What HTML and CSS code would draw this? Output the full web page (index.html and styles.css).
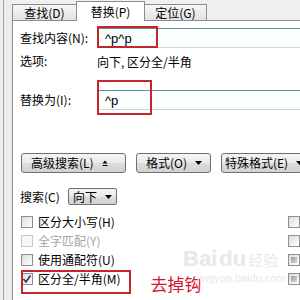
FILE: index.html
```html
<!DOCTYPE html>
<html lang="zh-CN">
<head>
    <meta charset="UTF-8">
    <meta name="viewport" content="width=device-width, initial-scale=1.0">
    <title>查找和替换</title>
    <link rel="stylesheet" href="styles.css">
</head>
<body>
    <div class="window">
        <div class="strip"></div>
        <div class="dialog">
            <!-- 选项卡 -->
            <div class="tabs">
                <div class="tab">查找(D)</div>
                <div class="tab active">替换(P)</div>
                <div class="tab">定位(G)</div>
            </div>
            <div class="panel">
                <div class="row find-row">
                    <span class="label">查找内容(N):</span>
                    <div class="field"><span>^p^p</span><span class="mark mark-find"></span></div>
                </div>
                <div class="row options-row">
                    <span class="label">选项:</span>
                    <span>向下, 区分全/半角</span>
                </div>
                <div class="row replace-row">
                    <span class="label">替换为(I):</span>
                    <div class="field"><span>^p</span><span class="mark mark-replace"></span></div>
                </div>
                <!-- 按钮 -->
                <div class="buttons">
                    <div class="btn btn-more">高级搜索(L)
                        <svg class="arrow" width="6" height="6" viewBox="0 0 6 6"><path d="M0.5 3.5 L3 0.5 L5.5 3.5 Z" fill="#000"/><rect x="0.5" y="5" width="5" height="1" fill="#000"/></svg>
                    </div>
                    <div class="btn btn-format">格式(O)
                        <svg class="arrow" width="7" height="4" viewBox="0 0 7 4"><path d="M0 0 H7 L3.5 4 Z" fill="#000"/></svg>
                    </div>
                    <div class="btn btn-special">特殊格式(E)
                        <svg class="arrow" width="7" height="4" viewBox="0 0 7 4"><path d="M0 0 H7 L3.5 4 Z" fill="#000"/></svg>
                    </div>
                </div>
                <div class="row search-row">
                    <span class="search-label">搜索(C)</span>
                    <div class="select">向下
                        <svg class="arrow" width="7" height="4" viewBox="0 0 7 4"><path d="M0 0 H7 L3.5 4 Z" fill="#000"/></svg>
                    </div>
                </div>
                <!-- 复选框 -->
                <div class="checks">
                    <div class="check"><span class="box"></span>区分大小写(H)</div>
                    <div class="check"><span class="box"></span></div>
                    <div class="check disabled"><span class="box"></span>全字匹配(Y)</div>
                    <div class="check"><span class="box"></span></div>
                    <div class="check"><span class="box"></span>使用通配符(U)</div>
                    <div class="check"><span class="box"><span class="inner"></span></span></div>
                    <div class="check last">
                        <span class="box"><svg width="10" height="10" viewBox="0 0 10 10"><polyline points="1.5,5 4,8 8.5,1.5" fill="none" stroke="#24365e" stroke-width="1.6"/></svg></span>区分全/半角(M)
                        <span class="mark mark-check"></span>
                        <span class="note">去掉钩</span>
                    </div>
                    <div class="check"><span class="box"><span class="inner"></span></span></div>
                </div>
            </div>
        </div>
        <div class="watermark">
            <div class="wm-logo"><span class="wm-big">Bai</span><span class="wm-big">du</span><span class="wm-cn">经验</span></div>
            <div class="wm-url">jingyan.baidu.com</div>
        </div>
    </div>
</body>
</html>
```

FILE: styles.css
```css
*{
    margin: 0;
    padding: 0;
}
body{
    font-family: "Noto Sans CJK SC", "Liberation Sans", sans-serif;
    font-size: 12px;
    color: #000;
    background: #f0f0f0;
}
.window{
    position: relative;
    display: flex;
    width: 300px;
    height: 300px;
    overflow: hidden;
}
.strip{
    flex: 0 0 9px;
    margin-left: 3px;
    box-sizing: border-box;
    border-left: 1px solid #a4a4a4;
    background: #ececec;
}
.dialog{
    flex: 0 0 340px;
    display: flex;
    flex-direction: column;
}
.tabs{
    display: flex;
    align-items: flex-end;
    height: 20px;
}
.tab{
    box-sizing: border-box;
    height: 16px;
    border: 1px solid #898c95;
    border-bottom: none;
    background: linear-gradient(#f6f6f6, #e2e2e2);
    display: flex;
    align-items: center;
    justify-content: center;
    line-height: 1;
}
.tab:nth-child(1){
    width: 65px;
}
.tab:nth-child(3){
    width: 63px;
    margin-left: -1px;
}
.tab.active{
    position: relative;
    z-index: 1;
    width: 69px;
    height: 20px;
    margin-left: -1px;
    margin-bottom: -1px;
    background: #fff;
}
.panel{
    flex: 1;
    background: #fff;
    border-top: 1px solid #898c95;
    border-left: 1px solid #898c95;
    padding-left: 7px;
}
.row{
    display: flex;
    align-items: center;
}
.label{
    width: 77px;
    flex-shrink: 0;
    line-height: 14px;
}
.find-row{
    margin-top: 7px;
}
.options-row{
    margin-top: 6px;
    height: 14px;
}
.replace-row{
    margin-top: 22px;
}
.field{
    position: relative;
    flex: 1;
    height: 20px;
    box-sizing: border-box;
    border: 1px solid #ccd6d8;
    border-top-color: #6f8e95;
    background: #fbfefe;
    display: flex;
    align-items: center;
    padding-left: 7px;
    font-family: "Liberation Sans", sans-serif;
    font-size: 13px;
}
.mark{
    position: absolute;
    box-sizing: border-box;
    border: 2px solid #c4262e;
}
.mark-find{
    left: -1px;
    top: -3px;
    width: 61px;
    height: 22px;
}
.mark-replace{
    left: -1px;
    top: -11px;
    width: 55px;
    height: 35px;
}
.buttons{
    display: flex;
    gap: 10px;
    margin-top: 43px;
    padding-left: 1px;
}
.btn, .select{
    box-sizing: border-box;
    height: 20px;
    display: flex;
    align-items: center;
    border: 1px solid #707070;
    border-radius: 3px;
    background: linear-gradient(#f4f4f4 0%, #ebebeb 48%, #dddddd 52%, #d2d2d2 100%);
    flex-shrink: 0;
    line-height: 1;
}
.btn-more{
    width: 105px;
    padding-left: 9px;
}
.btn-more .arrow{
    margin-left: 8px;
}
.btn-format{
    width: 75px;
    padding-left: 9px;
}
.btn-format .arrow{
    margin-left: 8px;
}
.btn-special{
    width: 90px;
    padding-left: 3px;
}
.btn-special .arrow{
    margin-left: 8px;
}
.search-row{
    margin-top: 15px;
}
.search-label{
    width: 48px;
}
.select{
    width: 49px;
    height: 17px;
    border-radius: 2px;
    padding-left: 4px;
}
.select .arrow{
    margin-left: 8px;
}
.checks{
    display: grid;
    grid-template-columns: 267px 1fr;
    grid-auto-rows: 19px;
    margin-top: 7px;
}
.check{
    position: relative;
    display: flex;
    align-items: center;
    gap: 5px;
    padding-left: 1px;
}
.box{
    box-sizing: border-box;
    width: 12px;
    height: 12px;
    border: 1px solid #8f8f8f;
    background: linear-gradient(135deg, #dcdcdc, #ffffff);
    display: flex;
    align-items: center;
    justify-content: center;
    flex-shrink: 0;
}
.box .inner{
    width: 6px;
    height: 6px;
    background: linear-gradient(135deg, #9c9c9c, #d8d8d8);
}
.disabled{
    color: #a6a6a6;
}
.disabled .box{
    border-color: #c8c8c8;
    background: #f6f6f6;
}
.mark-check{
    left: 1px;
    top: 1px;
    width: 110px;
    height: 24px;
}
.note{
    margin-left: 25px;
    margin-top: 10px;
    font-size: 17px;
    color: #d9142b;
    line-height: 1;
}
.watermark{
    position: absolute;
    left: 183px;
    top: 246px;
    color: #e8e8e8;
    white-space: nowrap;
    pointer-events: none;
}
.wm-logo{
    display: flex;
    align-items: baseline;
    gap: 2px;
}
.wm-big{
    font-family: "Liberation Sans", sans-serif;
    font-weight: bold;
    font-size: 22px;
}
.wm-cn{
    font-size: 15px;
}
.wm-url{
    font-family: "Liberation Sans", sans-serif;
    font-size: 11px;
    margin-left: 14px;
}
```
